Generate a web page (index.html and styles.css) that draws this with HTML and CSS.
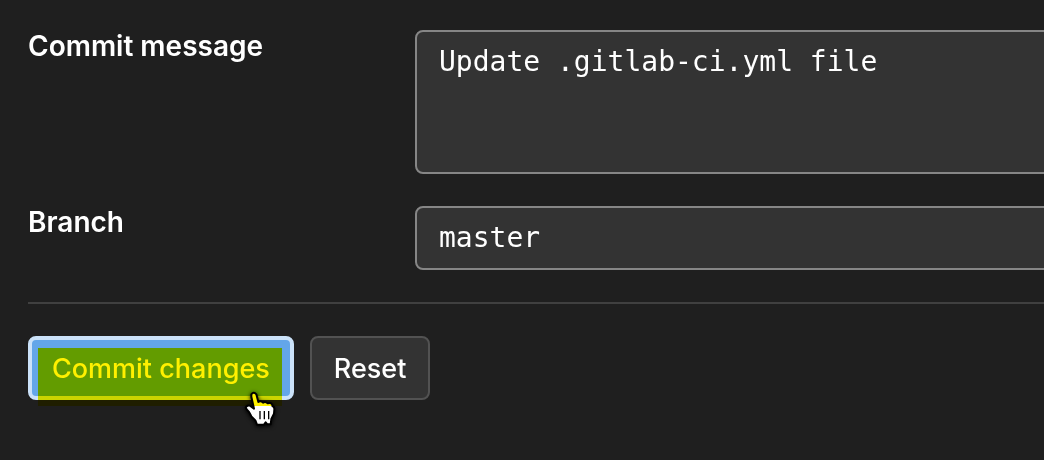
FILE: index.html
```html
<!DOCTYPE html>
<html lang="en">
<head>
<meta charset="utf-8">
<meta name="viewport" content="width=device-width, initial-scale=1">
<title>Commit changes</title>
<link rel="stylesheet" href="styles.css">
</head>
<body>
<form class="commit-form">
  <div class="field">
    <label class="field-label" for="message">Commit message</label>
    <textarea class="control control-message" id="message" spellcheck="false">Update .gitlab-ci.yml file</textarea>
  </div>
  <div class="field">
    <label class="field-label" for="branch">Branch</label>
    <input class="control" id="branch" type="text" value="master" spellcheck="false">
  </div>
  <div class="actions">
    <div class="marked">
      <button class="btn btn-commit" type="button">Commit changes</button>
      <svg class="pointer" viewBox="0 0 150 165" aria-hidden="true">
        <path class="pointer-hand" d="M49 43 Q56 34 64 43 L70 66 Q77 61 84 68 Q91 63 98 70 Q107 66 112 74 L112 78 Q119 80 118 89 L117 101 L109 117 L107 133 L97 133 L92 127 L87 134 L66 134 L61 121 L49 109 L42 96 Q34 88 32 83 Q35 74 45 77 L57 86 L49 50 Z"/>
        <path class="pointer-lines" d="M75 93V118M88 93V118M101 93V118"/>
      </svg>
      <span class="marker"></span>
    </div>
    <button class="btn" type="reset">Reset</button>
  </div>
</form>
</body>
</html>
```
FILE: styles.css
```css
* {
  box-sizing: border-box;
}

html {
  background: #1f1f1f;
}

body {
  margin: 0;
  min-height: 100vh;
  color: #fff;
  font-family: Inter, "Liberation Sans", sans-serif;
  font-size: 28px;
  line-height: 32px;
  overflow-x: hidden;
}

.commit-form {
  margin-right: -8px;
  padding: 30px 0 32px 28px;
}

.field {
  display: grid;
  grid-template-columns: 387px 1fr;
  align-items: start;
  margin-bottom: 32px;
}

.field-label {
  font-weight: 600;
}

.control {
  display: block;
  width: 100%;
  height: 64px;
  margin: 0;
  padding: 13px 22px 15px;
  border: 2px solid #868686;
  border-radius: 8px;
  outline: 0;
  background: #333;
  color: #fff;
  font: 28px/32px "DejaVu Sans Mono", monospace;
}

.control-message {
  height: 144px;
  padding-top: 14px;
  resize: none;
}

.actions {
  display: flex;
  gap: 16px;
  padding-top: 32px;
  border-top: 2px solid #404040;
}

.marked {
  position: relative;
}

.btn {
  height: 64px;
  margin: 0;
  padding: 1px 22px 0;
  border: 2px solid #525252;
  border-radius: 8px;
  background: #333;
  color: #fff;
  font: inherit;
  font-size: 27px;
  font-weight: 500;
}

.btn-commit {
  padding: 1px 20px 0;
  border: 4px solid #cbe2f9;
  background: #63a6e9;
}

.pointer {
  position: absolute;
  top: 44px;
  left: 207px;
  width: 50px;
  height: 55px;
  filter: drop-shadow(0 1px 2px #000);
}

.pointer-hand {
  fill: #fff;
  stroke: #000;
  stroke-width: 6;
  stroke-linejoin: round;
}

.pointer-lines {
  fill: none;
  stroke: #000;
  stroke-width: 4;
}

.marker {
  position: absolute;
  inset: 12px 12px -6px 10px;
  background: #fff000;
  mix-blend-mode: multiply;
  pointer-events: none;
}
```
